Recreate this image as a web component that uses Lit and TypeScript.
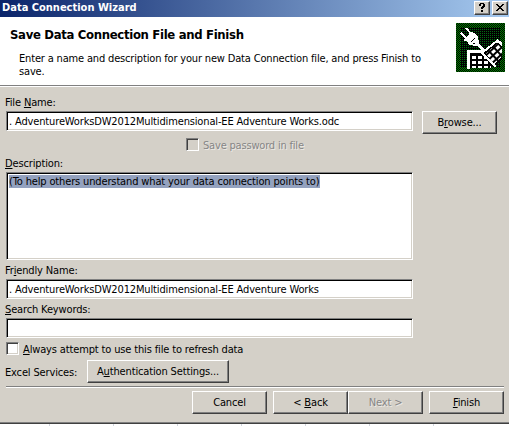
import { LitElement, html, css } from "lit";
import { customElement } from "lit/decorators.js";

@customElement("app-root")
export class AppRoot extends LitElement {
  static styles = css`
    :host { display: flex; flex-direction: column; box-sizing: border-box; width: 509px; height: 426px; overflow: hidden; background: #d4d0c8; color: #000; font: 11px/13px "DejaVu Sans Condensed", "DejaVu Sans", sans-serif; font-stretch: condensed; letter-spacing: -0.145px; white-space: nowrap; }
    * { box-sizing: border-box; }
    u { text-decoration: underline; text-decoration-thickness: 1px; text-underline-offset: 1px; }
    .titlebar { display: flex; flex: none; height: 17px; padding: 1px 1px 0 2px; background: linear-gradient(90deg, #0a246a, #a6caf0); color: #fff; font-weight: bold; line-height: 14px; letter-spacing: 0; }
    .caption { flex: 1; }
    .tool { width: 16px; height: 14px; margin-left: 2px; background: #d4d0c8; border: 1px solid; border-color: #fff #404040 #404040 #fff; box-shadow: inset -1px -1px #808080; }
    .tool svg { display: block; }
    .head { display: flex; flex: none; height: 69px; background: #fff; border-bottom: 1px solid #808080; box-shadow: 0 1px #fff; padding: 6px 4px 0 10px; }
    .copy { flex: 1; }
    h1 { margin: 4px 0 0; font-size: 13px; line-height: 16px; letter-spacing: -0.33px; }
    .copy p { margin: 9px 0 0 9px; letter-spacing: -0.167px; }
    .body { padding: 10px 0 0 6px; }
    .label { margin-left: -1px; height: 13px; }
    .row { display: flex; }
    .field { width: 407px; height: 20px; margin-top: 2px; background: #fff; border: 1px solid; border-color: #808080 #fff #fff #808080; box-shadow: inset 1px 1px #000, inset -1px -1px #d4d0c8; padding: 3px 0 0 2px; }
    .area { height: 88px; margin-top: 2px; padding-top: 2px; }
    .sel { display: inline-block; background: #94a2bf; height: 13px; padding-right: 1px; }
    .btn { width: 75px; height: 23px; text-align: center; padding-top: 4px; border: 1px solid; border-color: #fff #404040 #404040 #fff; box-shadow: inset -1px -1px #808080; }
    .browse { margin: 2px 0 -3px 9px; }
    .auth { width: 142px; margin-left: 9px; }
    .box { width: 13px; height: 13px; margin-right: 4px; background: #fff; border: 1px solid; border-color: #808080 #fff #fff #808080; box-shadow: inset 1px 1px #404040, inset -1px -1px #d4d0c8; }
    .check { height: 13px; }
    .check span { padding-top: 1px; }
    .off { color: #868686; text-shadow: 1px 1px #ece9e4; }
    .dim { background: #d4d0c8; }
    .password { margin: 7px 0 0 180px; letter-spacing: -0.19px; }
    .description { margin-top: 6px; }
    .friendly { margin-top: 4px; }
    .keywords { margin-top: 4px; }
    .refresh { margin-top: 4px; }
    .services { margin: 5px 0 0 -1px; }
    .services span { width: 73px; padding-top: 6px; }
    .footer { display: flex; flex: none; margin: 3px 5px 0 6px; padding-top: 4px; border-top: 1px solid #808080; box-shadow: inset 0 1px #fff; justify-content: flex-end; }
    .gap { margin-right: 6px; }
    .sheet { margin-top: auto; height: 4px; flex: none; border-top: 1px solid #808080; background: repeating-linear-gradient(90deg, #fff 0 63px, #d0d4dc 63px 64px); background-position-x: -14px; box-shadow: inset 0 1px #404040; }
  `;

  private icon() {
    return html`<svg width="49" height="49" viewBox="0 0 49 49" shape-rendering="crispEdges">
      <defs>
        <pattern id="dense" width="2" height="2" patternUnits="userSpaceOnUse"><path d="M0 0h1v1H0zM1 1h1v1H1z" fill="#008000"/></pattern>
        <pattern id="sparse" width="2" height="2" patternUnits="userSpaceOnUse"><rect width="2" height="2" fill="#000"/><path d="M0 0h1v1H0z" fill="#006a10"/></pattern>
        <pattern id="keys" x="16" y="33" width="6" height="5" patternUnits="userSpaceOnUse"><path d="M0 0h4v3H0z" fill="#fff"/></pattern>
        <pattern id="tilted" width="6" height="5" patternUnits="userSpaceOnUse" patternTransform="rotate(-43)"><path d="M0 0h4v3.4H0z" fill="#fff"/></pattern>
      </defs>
      <rect width="49" height="49" fill="#000"/><rect width="49" height="49" fill="url(#dense)"/>
      <rect x="5" y="5" width="39" height="39" fill="url(#sparse)"/>
      <path d="M12 28h23v17H12z" fill="#000"/><path d="M16 33h19v12H16z" fill="url(#keys)"/>
      <path d="M12.5 46V28.5H28" fill="none" stroke="#fff" stroke-width="3"/>
      <path d="M26 31 41 17l5 3v15L37 45z" fill="#000"/><path d="M30 30 42 20l4 3v11L37 42z" fill="url(#tilted)"/>
      <path d="M27 29 41 18M26 30l14 14" fill="none" stroke="#fff" stroke-width="2"/>
      <path d="M39 18l2-2 5 3v4l-4-3z" fill="#fff"/>
      <path d="M5 10l7 7M10 5l6 7" stroke="#fff" stroke-width="2"/><path d="M20 19l8 9" stroke="#fff" stroke-width="3"/>
      <path d="M8 18l1-3 7-6 2 1 4 3 1 7-3 3-7-1-2-4z" fill="#fff"/><path d="M15 19l4-4M17 20h2" stroke="#000"/>
    </svg>`;
  }

  render() {
    return html`
      <div class="titlebar"><span class="caption">Data Connection Wizard</span>
        <div class="tool"><svg width="14" height="12" shape-rendering="crispEdges"><path d="M4 2h1V1h4v1h1v3H9v1H8v1H6V5h1V4h1V2H6v2H4zM6 8h2v2H6z"/></svg></div>
        <div class="tool"><svg width="14" height="12" shape-rendering="crispEdges"><path d="M3 2h2v1h1v1h2V3h1V2h2v1h-1v1H9v1H8v1h1v1h1v1h1v1H9V8H8V7H6v1H5v1H3V8h1V7h1V6h1V5H5V4H4V3H3z"/></svg></div></div>
      <div class="head"><div class="copy"><h1>Save Data Connection File and Finish</h1>
        <p>Enter a name and description for your new Data Connection file, and press Finish to<br />save.</p></div>
        ${this.icon()}
      </div>
      <div class="body">
        <div class="label">File <u>N</u>ame:</div>
        <div class="row"><div class="field">. AdventureWorksDW2012Multidimensional-EE Adventure Works.odc</div><div class="btn browse">B<u>r</u>owse...</div></div>
        <div class="row check off password"><div class="box dim"></div><span>Save password in file</span></div>
        <div class="label description"><u>D</u>escription:</div>
        <div class="field area"><span class="sel">(To help others understand what your data connection points to)</span></div>
        <div class="label friendly">Fr<u>i</u>endly Name:</div>
        <div class="field">. AdventureWorksDW2012Multidimensional-EE Adventure Works</div>
        <div class="label keywords"><u>S</u>earch Keywords:</div>
        <div class="field"></div>
        <div class="row check refresh"><div class="box"></div><span><u>A</u>lways attempt to use this file to refresh data</span></div>
        <div class="row services"><span>Excel Services:</span><div class="btn auth">A<u>u</u>thentication Settings...</div></div>
      </div>
      <div class="footer">
        <div class="btn gap">Cancel</div><div class="btn">&lt; <u>B</u>ack</div><div class="btn off gap">Next &gt;</div><div class="btn"><u>F</u>inish</div>
      </div>
      <div class="sheet"></div>
    `;
  }
}
